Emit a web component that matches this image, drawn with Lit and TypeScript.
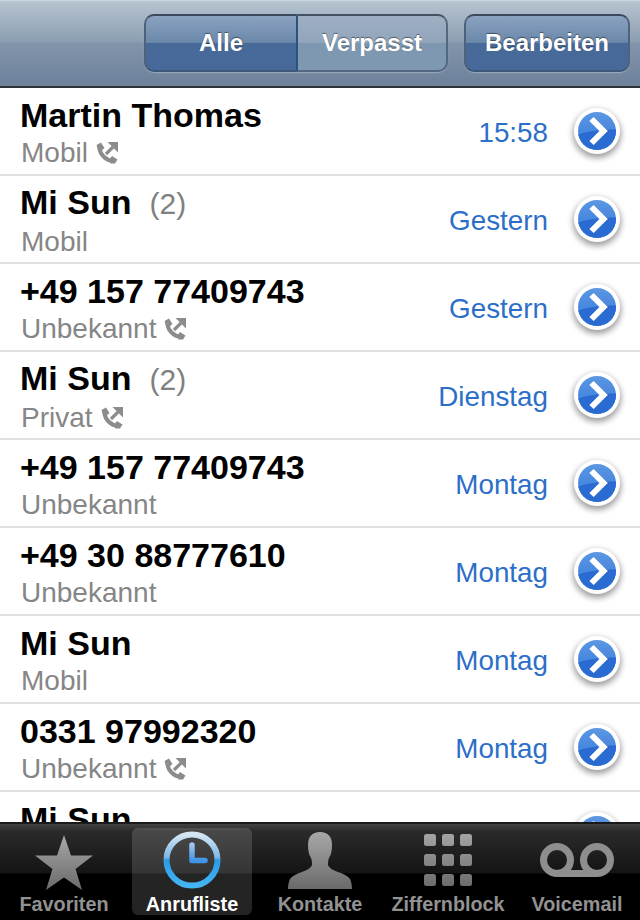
import { LitElement, html, css, svg } from "lit";
import { customElement } from "lit/decorators.js";

interface Call { name: string; count?: number; sub: string; icon?: boolean; when: string; }

const CALLS: Call[] = [
  { name: "Martin Thomas", sub: "Mobil", icon: true, when: "15:58" },
  { name: "Mi Sun", count: 2, sub: "Mobil", when: "Gestern" },
  { name: "+49 157 77409743", sub: "Unbekannt", icon: true, when: "Gestern" },
  { name: "Mi Sun", count: 2, sub: "Privat", icon: true, when: "Dienstag" },
  { name: "+49 157 77409743", sub: "Unbekannt", when: "Montag" },
  { name: "+49 30 88777610", sub: "Unbekannt", when: "Montag" },
  { name: "Mi Sun", sub: "Mobil", when: "Montag" },
  { name: "0331 97992320", sub: "Unbekannt", icon: true, when: "Montag" },
  { name: "Mi Sun", sub: "Mobil", when: "Montag" },
];

const phoneIcon = html`<svg class="phone" width="24" height="24" viewBox="0 0 24 24">
  <path fill="none" stroke="#8c8c8c" stroke-width="4" stroke-linecap="round" d="M4.500 7 C5 13.500 11 19.500 18 20"/>
  <path fill="#8c8c8c" d="M1.500 4 L6 1.500 L9.500 7 L6 10 L3 9 Z M14 19 L17 15 L22.500 18.500 L20 22.500 L15.500 22.500 Z"/>
  <path fill="none" stroke="#8c8c8c" stroke-width="3.200" d="M11 13 L18 6"/>
  <path fill="#8c8c8c" d="M12.500 1 L23 1 L23 11.500 Z"/>
</svg>`;

const disclosure = html`<svg class="disc" width="62" height="70" viewBox="-5 -5 62 70">
  <defs>
    <linearGradient id="dg" x1="0" y1="0" x2="0" y2="1">
      <stop offset="0" stop-color="#5d97e2"/>
      <stop offset="1" stop-color="#3378de"/>
    </linearGradient>
    <filter id="dsh" x="-30%" y="-30%" width="160%" height="160%">
      <feGaussianBlur stdDeviation="3"/>
    </filter>
    <clipPath id="dc"><circle cx="26" cy="26" r="19"/></clipPath>
  </defs>
  <circle cx="26" cy="29" r="24" fill="#000" opacity="0.38" filter="url(#dsh)"/>
  <circle cx="26" cy="26" r="23" fill="#fff"/>
  <circle cx="26" cy="26" r="19" fill="url(#dg)"/>
  <path clip-path="url(#dc)" fill="#2a6bd2" d="M4 31 C14 26 26 25 48 24 L48 48 L4 48 Z"/>
  <path d="M20.500 14 L32.500 26 L20.500 38" fill="none" stroke="#fff" stroke-width="6" stroke-linejoin="miter"/>
</svg>`;

const grayDefs = svg`<defs>
  <linearGradient id="tg" x1="0" y1="0" x2="0" y2="1">
    <stop offset="0" stop-color="#a8a8a8"/>
    <stop offset="1" stop-color="#6a6a6a"/>
  </linearGradient>
  <linearGradient id="cr" x1="0" y1="0" x2="0" y2="1">
    <stop offset="0" stop-color="#d4e6f4"/>
    <stop offset="0.45" stop-color="#7db6e8"/>
    <stop offset="0.5" stop-color="#2b9be8"/>
    <stop offset="1" stop-color="#45b4f2"/>
  </linearGradient>
  <linearGradient id="hd" x1="0" y1="0" x2="0" y2="1">
    <stop offset="0" stop-color="#9cc6ee"/>
    <stop offset="1" stop-color="#3f94e8"/>
  </linearGradient>
</defs>`;

const star = html`<svg width="58" height="60" viewBox="0 -5 58 60">${grayDefs}
  <path fill="url(#tg)" d="M29 0 L36 20.500 L58 20.500 L40.500 34 L47 55 L29 42.500 L11 55 L17.500 34 L0 20.500 L22 20.500 Z"/></svg>`;

const clock = html`<svg width="58" height="58" viewBox="0 0 58 58">${grayDefs}
  <circle cx="29" cy="29" r="25.500" fill="none" stroke="url(#cr)" stroke-width="6"/>
  <path fill="none" stroke="url(#hd)" stroke-width="5.500" stroke-linecap="round" stroke-linejoin="round" d="M29 14 L29 29.500 L42 29.500"/></svg>`;

const person = html`<svg width="64" height="58" viewBox="0 0 64 58">${grayDefs}
  <path fill="url(#tg)" d="M32 1 C40 1 44 6 44 14 C44 20 43 24 41 27 C40 29 40 32 40 34 C41 37 45 39 50 41 C56 43 60 45 62 48 C63.500 51 64 55 64 58 L0 58 C0 55 .5 51 2 48 C4 45 8 43 14 41 C19 39 23 37 24 34 C24 32 24 29 23 27 C21 24 20 20 20 14 C20 6 24 1 32 1 Z"/></svg>`;

const keypad = html`<svg width="48" height="52" viewBox="0 0 48 52">
  <defs><linearGradient id="kg" gradientUnits="userSpaceOnUse" x1="0" y1="0" x2="0" y2="52">
    <stop offset="0" stop-color="#a4a4a4"/><stop offset="1" stop-color="#6c6c6c"/>
  </linearGradient></defs>
  <g fill="url(#kg)">
  ${[0, 20, 40].map(y => [0, 18, 36].map(x => svg`<rect x=${x} y=${y} width="12" height="12" rx="2.500"/>`))}
  </g></svg>`;

const voicemail = html`<svg width="74" height="34" viewBox="0 0 74 34">
  <path fill="none" stroke="#8e8e8e" stroke-width="7" d="M17 30.500 L57 30.500 A13.500 13.500 0 1 0 43.500 17 A13.500 13.500 0 0 0 57 30.500 M17 30.500 A13.500 13.500 0 1 1 30.500 17 A13.500 13.500 0 0 1 17 30.500"/></svg>`;

const TABS = [
  { label: "Favoriten", icon: star },
  { label: "Anrufliste", icon: clock, active: true },
  { label: "Kontakte", icon: person },
  { label: "Ziffernblock", icon: keypad },
  { label: "Voicemail", icon: voicemail },
];

@customElement("app-root")
export class AppRoot extends LitElement {
  static styles = css`
    :host {
      display: block;
      width: 640px;
      height: 920px;
      font-family: "Liberation Sans", Arial, sans-serif;
      overflow: hidden;
    }
    .screen { display: flex; flex-direction: column; height: 920px; background: #fff; }

    .nav {
      flex: 0 0 88px;
      box-sizing: border-box;
      display: flex;
      justify-content: flex-end;
      align-items: flex-start;
      gap: 16px;
      padding: 13px 10px 0 0;
      background: linear-gradient(#b9c6d3 0, #b4c2cf 3%, #8b9db1 48%, #8194aa 50%, #6e829c 98%);
      border-top: 1px solid #cdd5dd;
      border-bottom: 2px solid #2d3138;
    }
    .seg { display: flex; height: 58px; }
    .btn {
      box-sizing: border-box;
      height: 58px;
      display: flex;
      align-items: center;
      justify-content: center;
      font-size: 24px;
      font-weight: 700;
      color: #fff;
      text-shadow: 0 -1px 1px rgba(0,0,0,.45);
      border: 2px solid #4f627c;
      border-top-color: #3a495c;
      border-bottom-color: #3f5877;
      box-shadow: 0 1px 1px rgba(255,255,255,.28);
      background: linear-gradient(#8ba2c0 0, #6a88aa 49%, #476a99 50%, #46699a 100%);
    }
    .edit { width: 166px; border-radius: 10px; }
    .all { width: 154px; border-radius: 10px 0 0 10px; border-right: 2px solid #2a4f80; }
    .missed {
      width: 150px;
      border-radius: 0 10px 10px 0;
      border-left: 0;
      border-color: #56687f;
      border-top-color: #445266;
      background: linear-gradient(#9fafc4 0, #92a5bb 49%, #7d97b1 50%, #7f99b3 100%);
    }

    .list { flex: 1 1 auto; min-height: 0; overflow: hidden; }
    .row {
      box-sizing: border-box;
      height: 88px;
      display: flex;
      align-items: center;
      padding-left: 20px;
      border-bottom: 2px solid #e0e0e0;
    }
    .text { flex: 1 1 auto; min-width: 0; padding-top: 3px; }
    .name {
      font-size: 34px;
      font-weight: 700;
      line-height: 38px;
      color: #000;
      white-space: nowrap;
    }
    .count { font-weight: 400; font-size: 30px; color: #808080; margin-left: 18px; }
    .sub {
      display: flex;
      align-items: center;
      gap: 7px;
      font-size: 28px;
      line-height: 34px;
      color: #868686;
      margin-top: 2px;
      padding-left: 1px;
    }
    .phone { flex: none; }
    .when { font-size: 27.8px; color: #2c6fc8; white-space: nowrap; padding-top: 4px; }
    .disc { flex: none; margin: 7px 12px 0 18px; display: block; }

    .tabs {
      flex: 0 0 98px;
      box-sizing: border-box;
      display: flex;
      padding: 4px 0 5px;
      border-top: 2px solid #1a1a1a;
      background: linear-gradient(#414141 0, #2a2a2a 8%, #141414 51%, #000 52%, #000 100%);
    }
    .tab {
      flex: 1 1 0;
      min-width: 0;
      margin: 0 4px;
      display: flex;
      flex-direction: column;
      align-items: center;
      border-radius: 6px;
      font-size: 19.8px;
      font-weight: 700;
      color: #929292;
      white-space: nowrap;
    }
    .tab:last-child { margin: 0 3px 0 5px; }
    .tab.active { background: rgba(255,255,255,.14); color: #fff; }
    .icon { height: 60px; display: flex; align-items: center; justify-content: center; margin-top: 2px; }
    .label { line-height: 20px; margin-top: 4px; }
    .tab svg { display: block; }
  `;

  render() {
    return html`<div class="screen">
      <div class="nav">
        <div class="seg">
          <div class="btn all">Alle</div>
          <div class="btn missed">Verpasst</div>
        </div>
        <div class="btn edit">Bearbeiten</div>
      </div>
      <div class="list">
        ${CALLS.map(c => html`<div class="row">
          <div class="text">
            <div class="name">${c.name}${c.count ? html`<span class="count">(${c.count})</span>` : ""}</div>
            <div class="sub">${c.sub}${c.icon ? phoneIcon : ""}</div>
          </div>
          <div class="when">${c.when}</div>
          ${disclosure}
        </div>`)}
      </div>
      <div class="tabs">
        ${TABS.map(t => html`<div class="tab ${t.active ? "active" : ""}">
          <div class="icon">${t.icon}</div>
          <div class="label">${t.label}</div>
        </div>`)}
      </div>
    </div>`;
  }
}
